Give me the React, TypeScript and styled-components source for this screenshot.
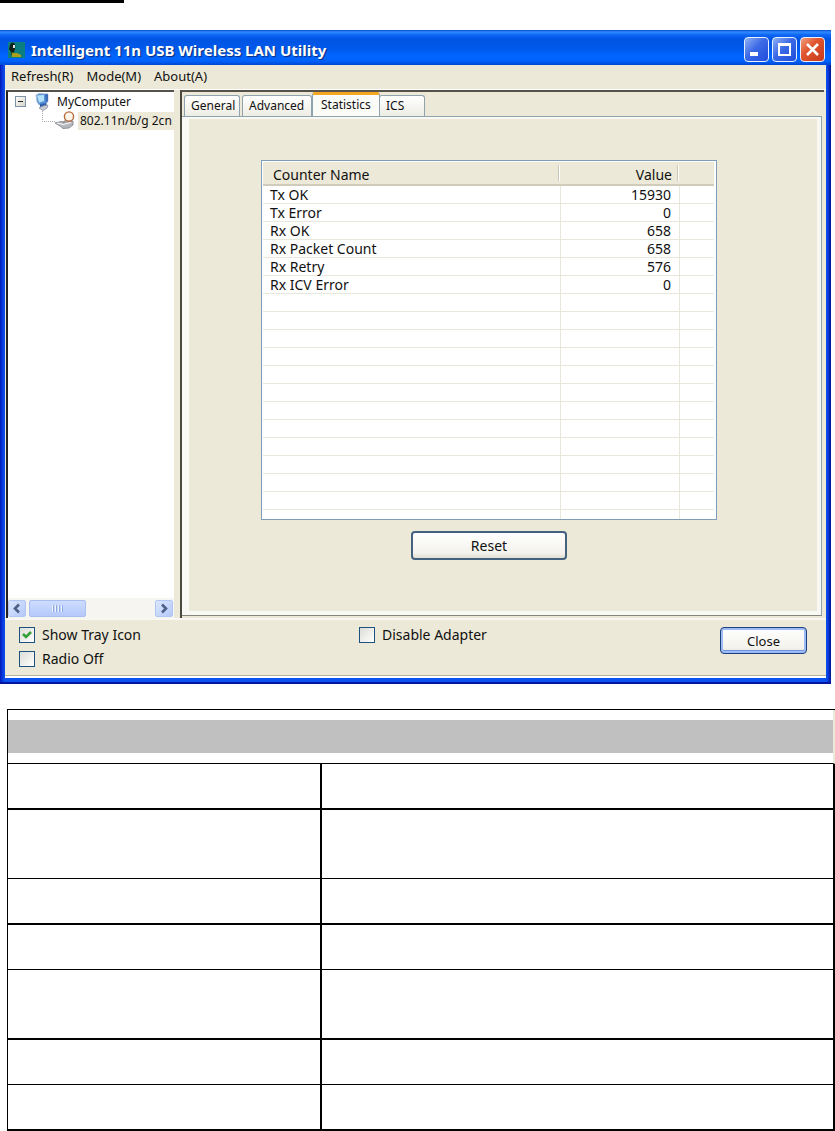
import React, { useState } from "react";
import styled, { createGlobalStyle, css } from "styled-components";

const face = "#ece9d8";
const steel = "#8fa3ae";

const GlobalStyle = createGlobalStyle`
  *, *::before, *::after { box-sizing: border-box; }
  body {
    margin: 0;
    background: #fff;
    color: #111;
    font-family: "Noto Sans", "Open Sans", sans-serif;
    font-size: 14px;
    line-height: 18px;
  }
  button, input { font: inherit; color: inherit; }
`;

const Page = styled.main`
  display: flex;
  flex-direction: column;
`;

const HeadingRule = styled.div`
  width: 124px;
  height: 3px;
  background: #000;
  margin-bottom: 27px;
`;

const Window = styled.section`
  margin-right: 4px;
  padding: 0 5px 4px;
  background: linear-gradient(90deg, #0019b8 0, #0a3fe0 3px, #0b52ee 5px, #0b52ee calc(100% - 5px), #0a3bdc calc(100% - 3px), #00138f 100%);
  border-bottom: 2px solid #0014a0;
`;

const TitleBar = styled.header`
  display: flex;
  align-items: center;
  height: 35px;
  margin: 0 -5px;
  padding: 4px 6px 0 6px;
  background: linear-gradient(180deg, #0a49c8 0, #2e8cff 2px, #0f66f5 5px, #0054e3 9px, #0058ea 18px, #0066ff 26px, #0062fa 31px, #0047d4 35px);
`;

const Title = styled.h1`
  flex: 1;
  margin: 0 0 0 5px;
  color: #fff;
  font-size: 15px;
  line-height: 20px;
  font-weight: 700;
  text-shadow: 1px 1px 1px #0a2a80;
`;

const CaptionButtons = styled.div`
  display: flex;
  gap: 3px;
`;

const CaptionButton = styled.button<{ $danger?: boolean }>`
  width: 25px;
  height: 25px;
  padding: 0;
  border: 1px solid #e6f0ff;
  border-radius: 4px;
  background: ${(p) =>
    p.$danger
      ? "linear-gradient(135deg, #f0a080 0, #e0552f 40%, #c8391a 100%)"
      : "linear-gradient(135deg, #8fb0f5 0, #3c6ae6 45%, #1f4ddb 100%)"};
  svg { display: block; }
`;

const Client = styled.div`
  background: ${face};
`;

const MenuBar = styled.nav`
  display: flex;
  gap: 13px;
  height: 25px;
  padding: 2px 6px 0;
  border-bottom: 1px solid #fff;
`;

const MenuItem = styled.button`
  padding: 0;
  border: 0;
  background: none;
  font-size: 13px;
  line-height: 18px;
  align-self: flex-start;
`;

const Panes = styled.div`
  display: flex;
  height: 528px;
`;

const TreePane = styled.aside`
  display: flex;
  flex-direction: column;
  justify-content: space-between;
  width: 168px;
  margin: 0 6px 0 1px;
  border-left: 2px solid #222;
  border-top: 2px solid #55524a;
  background: #fff;
  overflow: hidden;
`;

const Tree = styled.ul`
  margin: 0;
  padding: 0;
  list-style: none;
  font-size: 12px;
  white-space: nowrap;
`;

const TreeRow = styled.div<{ $child?: boolean }>`
  display: flex;
  align-items: center;
  height: 19px;
  padding-left: ${(p) => (p.$child ? "34px" : "7px")};
`;

const TreeLabel = styled.span<{ $selected?: boolean }>`
  flex: 1;
  padding-left: ${(p) => (p.$selected ? "2px" : "6px")};
  ${(p) => p.$selected && css`background: ${face};`}
`;

const Toggle = styled.button`
  display: block;
  width: 11px;
  height: 11px;
  margin-right: 9px;
  padding: 0;
  border: 1px solid #7f93a8;
  background: linear-gradient(135deg, #fff, #d8d4c8);
  svg { display: block; }
`;

const ScrollBar = styled.div`
  display: flex;
  height: 20px;
  padding: 2px 1px 1px 0;
  background: #f6f5f1;
`;

const ScrollButton = styled.button`
  width: 18px;
  padding: 0;
  border: 1px solid #b2c6f3;
  border-radius: 2px;
  background: linear-gradient(135deg, #dbe6ff, #b4c9f9);
  svg { display: block; margin: auto; }
`;

const ScrollTrack = styled.div`
  flex: 1;
  padding-left: 3px;
`;

const ScrollThumb = styled.div`
  display: flex;
  align-items: center;
  justify-content: center;
  gap: 1px;
  width: 57px;
  height: 17px;
  border: 1px solid #a9bdf0;
  border-radius: 2px;
  background: linear-gradient(180deg, #cddcff, #b5c9fb);
`;

const Grip = styled.i`
  width: 2px;
  height: 7px;
  border-left: 1px solid #eef4ff;
  border-right: 1px solid #8fa9e6;
`;

const TabPane = styled.div`
  flex: 1;
  display: flex;
  flex-direction: column;
  margin-right: 2px;
  border-left: 2px solid #4a483f;
  border-top: 2px solid #55524a;
`;

const TabStrip = styled.div`
  display: flex;
  align-items: flex-end;
  height: 24px;
  padding-left: 2px;
`;

const Tab = styled.button<{ $active?: boolean; $width: number }>`
  width: ${(p) => p.$width}px;
  height: 21px;
  padding: 0 0 0 6px;
  text-align: left;
  font-size: 12px;
  line-height: 18px;
  border: 1px solid ${steel};
  border-bottom: 0;
  border-radius: 3px 3px 0 0;
  background: linear-gradient(180deg, #fff, #eeede4);
  margin-right: 2px;
  ${(p) =>
    p.$active &&
    css`
      height: 24px;
      padding: 0 0 2px 8px;
      margin: 0 -1px 0 -2px;
      border-top: 3px solid #f5a623;
      background: #fbfbf8;
    `}
`;

const TabBody = styled.div`
  flex: 1;
  margin: 0 2px 2px 0;
  padding: 43px 104px 0 79px;
  border: 1px solid ${steel};
  border-left: 0;
  border-bottom-color: #85857b;
  background: ${face};
  box-shadow: inset 7px 0 0 #f8f8f5, inset -4px -4px 0 #f8f8f5, inset 0 2px 0 #f8f8f5;
`;

const Counters = styled.div`
  display: flex;
  flex-direction: column;
  align-items: center;
  gap: 11px;
`;

const ListBox = styled.div`
  width: 100%;
  height: 360px;
  padding: 1px 2px 0 1px;
  border: 1px solid #7f9db9;
  background: #fff;
  overflow: hidden;
`;

const CounterTable = styled.table`
  width: 100%;
  table-layout: fixed;
  border-collapse: separate;
  border-spacing: 0;
`;

const HeadCell = styled.th<{ $right?: boolean; $last?: boolean }>`
  height: 24px;
  padding: 3px 8px 0 10px;
  font-weight: 400;
  text-align: ${(p) => (p.$right ? "right" : "left")};
  background: ${(p) =>
    p.$last
      ? face
      : `linear-gradient(90deg, #c9c6b6 0 1px, #fff 1px 2px) right 1px top 3px / 2px 16px no-repeat, ${face}`};
  border-bottom: 2px solid #cfccbb;
`;

const Cell = styled.td<{ $right?: boolean }>`
  height: 18px;
  padding: 0 8px 0 7px;
  line-height: 17px;
  text-align: ${(p) => (p.$right ? "right" : "left")};
  border-bottom: 1px solid #e9e7dc;
  border-right: 1px solid #e9e7dc;
  &:last-child { border-right: 0; }
`;

const PushButton = styled.button<{ $width: number; $focused?: boolean }>`
  width: ${(p) => p.$width}px;
  height: ${(p) => (p.$focused ? 27 : 29)}px;
  padding: 0;
  font-size: ${(p) => (p.$focused ? 13 : 14)}px;
  line-height: 18px;
  border: ${(p) => (p.$focused ? "1px solid #1d3f80" : "2px solid #44617f")};
  border-radius: 4px;
  background: linear-gradient(180deg, #fff, #f3f2ec 80%, #e2dfd2);
  ${(p) => p.$focused && css`box-shadow: inset 0 0 0 2px #9dbcf3, inset 0 -1px 0 2px #6f96e6;`}
`;

const Footer = styled.footer`
  display: flex;
  align-items: flex-start;
  justify-content: space-between;
  height: 60px;
  padding: 7px 19px 0 14px;
  border-top: 2px solid #f8f7f1;
  border-bottom: 2px solid #fff;
  box-shadow: inset 0 -1px 0 #b5b2a2;
`;

const Options = styled.div`
  display: grid;
  grid-template-columns: 340px auto;
  row-gap: 6px;
  margin-top: -1px;
`;

const Option = styled.label`
  display: flex;
  align-items: center;
  gap: 7px;
  line-height: 18px;
`;

const CheckBox = styled.input`
  appearance: none;
  width: 16px;
  height: 16px;
  margin: 0;
  border: 1px solid #1c5180;
  background: linear-gradient(135deg, #dcdcd7, #fff);
`;

const CheckHolder = styled.span`
  position: relative;
  display: flex;
  svg {
    position: absolute;
    inset: 0;
    pointer-events: none;
  }
`;

const ManualTable = styled.table`
  width: calc(100% - 7px);
  margin: 25px 0 0 7px;
  border-collapse: separate;
  border-spacing: 0;
  table-layout: fixed;
  border-top: 1px solid #000;
  border-left: 1px solid #000;
`;

const ManualHead = styled.th`
  height: 54px;
  padding: 0;
  border-right: 2px solid ${face};
  border-bottom: 1px solid #000;
  background: linear-gradient(#c0c0c0, #c0c0c0) 0 10px / 100% 33px no-repeat padding-box;
`;

const ManualCell = styled.td<{ $height: number; $rule: number }>`
  height: ${(p) => p.$height}px;
  padding: 0;
  border-right: 2px solid #000;
  border-bottom: ${(p) => p.$rule}px solid #000;
`;

const counters: [string, number][] = [
  ["Tx OK", 15930],
  ["Tx Error", 0],
  ["Rx OK", 658],
  ["Rx Packet Count", 658],
  ["Rx Retry", 576],
  ["Rx ICV Error", 0],
];
const blankRows = 13;

const tabs = [
  { name: "General", width: 56 },
  { name: "Advanced", width: 70 },
  { name: "Statistics", width: 68 },
  { name: "ICS", width: 46 },
];

const manualRows = [
  { height: 46, rule: 2 },
  { height: 69, rule: 1 },
  { height: 46, rule: 2 },
  { height: 45, rule: 1 },
  { height: 70, rule: 2 },
  { height: 45, rule: 1 },
  { height: 46, rule: 2 },
];

const AppIcon = () => (
  <svg width="20" height="18" viewBox="0 0 20 18" aria-hidden="true">
    <rect x="2" y="1" width="17" height="16" fill="#0b7f80" />
    <path d="M4 4q1-3 4-2 2 2 1 6l-1 3H5L3 8z" fill="#12201c" />
    <path d="M7 4h2v3H7z" fill="#d8e8e0" />
    <path d="M5 11h3v3H5z" fill="#2f4a1e" />
    <path d="M6 12h5l4 2v2H6z" fill="#a8a01c" />
  </svg>
);

const ComputerIcon = () => (
  <svg width="16" height="18" viewBox="0 0 16 18" aria-hidden="true">
    <path d="M1 2l3-1.500 9 .5v7l-2 3-7 1-2-3z" fill="#5b94d8" stroke="#a9bcd4" strokeWidth="0.800" />
    <path d="M2 2.500l7-.5v6l-5 1.500z" fill="#b4e2fa" />
    <path d="M10 1.500l3-.5v7l-2 2z" fill="#3c6fb8" />
    <path d="M5 11l6-1 1 3-4 2-3-1z" fill="#2f5fae" />
    <path d="M4 15l4-2 5-1-1 3-4 2.500z" fill="#c9ccd4" stroke="#8b909c" strokeWidth="0.800" />
  </svg>
);

const AdapterIcon = () => (
  <svg width="36" height="19" viewBox="0 0 36 19" aria-hidden="true">
    <path d="M0.500 0v10.500H13" fill="none" stroke="#a8a8a8" strokeDasharray="1 1" />
    <path d="M13 12l6-1.500 4 .5 8-1v4l-4 3-6 .5-3-2.500z" fill="#b4b8be" stroke="#7d8189" strokeWidth="0.800" />
    <path d="M15 12l6 1.500 8-2" fill="none" stroke="#f8f8f8" strokeWidth="1.200" />
    <circle cx="27" cy="5.500" r="4.600" fill="#fff6ea" stroke="#b5683a" strokeWidth="1.400" />
    <path d="M24 9l-3 3" stroke="#9a8a80" strokeWidth="1.400" />
  </svg>
);

const Chevron = ({ flip }: { flip?: boolean }) => (
  <svg width="10" height="11" viewBox="0 0 10 11" aria-hidden="true">
    <path d={flip ? "M3 1.500l4 4-4 4" : "M7 1.500l-4 4 4 4"} fill="none" stroke="#4d6185" strokeWidth="2.600" />
  </svg>
);

function Check({ label, initial = false }: { label: string; initial?: boolean }) {
  const [on, setOn] = useState(initial);
  return (
    <Option>
      <CheckHolder>
        <CheckBox type="checkbox" checked={on} onChange={() => setOn(!on)} />
        {on && (
          <svg width="16" height="16" viewBox="0 0 16 16" aria-hidden="true">
            <path d="M4 7l3 3 5-5" fill="none" stroke="#35a035" strokeWidth="2.600" />
          </svg>
        )}
      </CheckHolder>
      {label}
    </Option>
  );
}

export default function App() {
  return (
    <Page>
      <GlobalStyle />
      <HeadingRule />
      <Window>
        <TitleBar>
          <AppIcon />
          <Title>Intelligent 11n USB Wireless LAN Utility</Title>
          <CaptionButtons>
            <CaptionButton aria-label="Minimize">
              <svg width="23" height="23" viewBox="0 0 23 23"><path d="M5 14h8v4H5z" fill="#fff" /></svg>
            </CaptionButton>
            <CaptionButton aria-label="Maximize">
              <svg width="23" height="23" viewBox="0 0 23 23">
                <path d="M5 5h13v13H5zM7 8v8h9V8z" fill="#fff" fillRule="evenodd" />
              </svg>
            </CaptionButton>
            <CaptionButton $danger aria-label="Close window">
              <svg width="23" height="23" viewBox="0 0 23 23">
                <path d="M6 6l11 11M17 6L6 17" stroke="#fff" strokeWidth="2.600" />
              </svg>
            </CaptionButton>
          </CaptionButtons>
        </TitleBar>
        <Client>
          <MenuBar>
            <MenuItem>Refresh(R)</MenuItem>
            <MenuItem>Mode(M)</MenuItem>
            <MenuItem>About(A)</MenuItem>
          </MenuBar>
          <Panes>
            <TreePane>
              <Tree>
                <li>
                  <TreeRow>
                    <Toggle aria-label="Collapse">
                      <svg width="9" height="9" viewBox="0 0 9 9"><path d="M2 4h5v1H2z" fill="#222" /></svg>
                    </Toggle>
                    <ComputerIcon />
                    <TreeLabel>MyComputer</TreeLabel>
                  </TreeRow>
                  <TreeRow $child>
                    <AdapterIcon />
                    <TreeLabel $selected>802.11n/b/g 2cn</TreeLabel>
                  </TreeRow>
                </li>
              </Tree>
              <ScrollBar>
                <ScrollButton aria-label="Scroll left"><Chevron /></ScrollButton>
                <ScrollTrack>
                  <ScrollThumb><Grip /><Grip /><Grip /><Grip /></ScrollThumb>
                </ScrollTrack>
                <ScrollButton aria-label="Scroll right"><Chevron flip /></ScrollButton>
              </ScrollBar>
            </TreePane>
            <TabPane>
              <TabStrip role="tablist">
                {tabs.map((t) => (
                  <Tab
                    key={t.name}
                    role="tab"
                    aria-selected={t.name === "Statistics"}
                    $active={t.name === "Statistics"}
                    $width={t.width}
                  >
                    {t.name}
                  </Tab>
                ))}
              </TabStrip>
              <TabBody>
                <Counters>
                  <ListBox>
                    <CounterTable>
                      <colgroup>
                        <col />
                        <col style={{ width: 119 }} />
                        <col style={{ width: 34 }} />
                      </colgroup>
                      <thead>
                        <tr>
                          <HeadCell>Counter Name</HeadCell>
                          <HeadCell $right>Value</HeadCell>
                          <HeadCell $last />
                        </tr>
                      </thead>
                      <tbody>
                        {counters.map(([name, value]) => (
                          <tr key={name}>
                            <Cell>{name}</Cell>
                            <Cell $right>{value}</Cell>
                            <Cell />
                          </tr>
                        ))}
                        {Array.from({ length: blankRows }, (_, i) => (
                          <tr key={i}>
                            <Cell />
                            <Cell />
                            <Cell />
                          </tr>
                        ))}
                      </tbody>
                    </CounterTable>
                  </ListBox>
                  <PushButton $width={156}>Reset</PushButton>
                </Counters>
              </TabBody>
            </TabPane>
          </Panes>
          <Footer>
            <Options>
              <Check label="Show Tray Icon" initial />
              <Check label="Disable Adapter" />
              <Check label="Radio Off" />
            </Options>
            <PushButton $width={87} $focused>Close</PushButton>
          </Footer>
        </Client>
      </Window>
      <ManualTable>
        <colgroup>
          <col style={{ width: "38%" }} />
          <col />
        </colgroup>
        <thead>
          <tr>
            <ManualHead colSpan={2} />
          </tr>
        </thead>
        <tbody>
          {manualRows.map((row, i) => (
            <tr key={i}>
              <ManualCell $height={row.height} $rule={row.rule} />
              <ManualCell $height={row.height} $rule={row.rule} />
            </tr>
          ))}
        </tbody>
      </ManualTable>
    </Page>
  );
}
